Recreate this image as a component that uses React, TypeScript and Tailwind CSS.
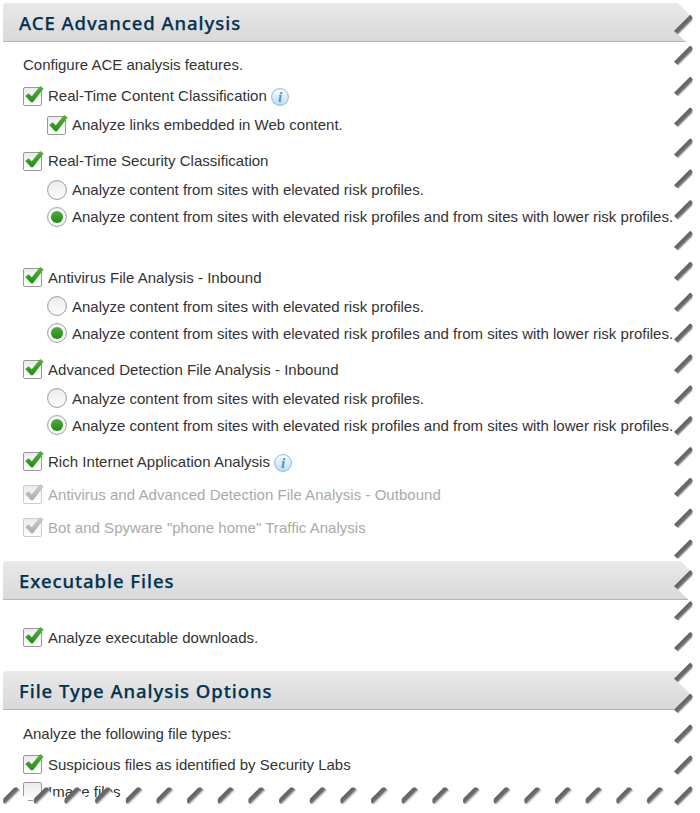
import React from 'react';

interface RowProps {
  label: string;
  checked?: boolean;
  disabled?: boolean;
  info?: boolean;
  raised?: boolean;
  loose?: boolean;
  className?: string;
}

function CheckRow({ label, checked = true, disabled = false, info = false, raised = false, loose = false, className = '' }: RowProps) {
  return (
    <div className={`flex h-5 items-center ${disabled ? 'text-[#aaaaaa]' : 'text-[#333333]'} ${className}`}>
      <svg width="22" height="22" viewBox="0 0 22 22" className={`mr-[3px] shrink-0 ${raised ? 'mb-[2px]' : ''}`}>
        <rect x="0.5" y="2.5" width="18" height="18" rx="1.5" fill="url(#boxFill)" stroke={disabled ? '#cccccc' : '#999999'} />
        {checked && (
          <path
            d="M2.2 11 L5.6 8.2 L8.8 11.2 L17.2 1 L20.6 3.4 L10 17.3 L8 17.3 Z"
            fill={disabled ? 'url(#grayCheck)' : 'url(#greenCheck)'}
          />
        )}
      </svg>
      <span className={`whitespace-nowrap ${loose ? 'tracking-[0.03px]' : ''}`}>{label}</span>
      {info && <InfoIcon />}
    </div>
  );
}

interface RadioProps {
  label: string;
  selected?: boolean;
  raised?: boolean;
  className?: string;
}

function RadioRow({ label, selected = false, raised = false, className = '' }: RadioProps) {
  return (
    <div className={`ml-6 flex h-5 items-center ${className}`}>
      <svg width="20" height="20" viewBox="0 0 20 20" className={`mr-[5px] shrink-0 ${raised ? 'mb-[2px]' : ''}`}>
        <circle cx="10" cy="10" r="9.4" fill={selected ? '#ffffff' : 'url(#boxFill)'} stroke="#999999" strokeWidth="1" />
        {selected && <circle cx="10" cy="10" r="6.1" fill="url(#greenDot)" />}
      </svg>
      <span className="whitespace-nowrap">{label}</span>
    </div>
  );
}

function InfoIcon() {
  return (
    <svg width="18" height="18" viewBox="0 0 18 18" className="mt-[2px] ml-[4.5px] shrink-0">
      <circle cx="9" cy="9" r="8.4" fill="url(#infoFill)" stroke="#8db8d2" strokeWidth="1" />
      <text x="9" y="14" textAnchor="middle" fontFamily="Liberation Serif, serif" fontStyle="italic" fontWeight="bold" fontSize="15" fill="#3b9bd4">
        i
      </text>
    </svg>
  );
}

function SectionHeader({ title }: { title: string }) {
  return (
    <div className="ml-[3px] flex h-[39px] w-[688px] items-center rounded-tl-sm border-b border-[#b4b4b4] bg-linear-to-b from-[#e9e9e9] to-[#d9d9d9] pt-[2px] pl-4">
      <h2 className="font-['Noto_Sans',sans-serif] text-[18.5px] leading-none font-medium tracking-[0.95px] whitespace-nowrap text-[#003350] [-webkit-text-stroke:0.25px_#003350]">
        {title}
      </h2>
    </div>
  );
}

function Defs() {
  return (
    <svg width="0" height="0" className="absolute">
      <defs>
        <linearGradient id="boxFill" x1="0" y1="0" x2="0" y2="1">
          <stop offset="0" stopColor="#ebebeb" />
          <stop offset="1" stopColor="#ffffff" />
        </linearGradient>
        <linearGradient id="greenCheck" x1="0" y1="0" x2="0" y2="1">
          <stop offset="0" stopColor="#4cb82f" />
          <stop offset="1" stopColor="#2b8a1f" />
        </linearGradient>
        <linearGradient id="grayCheck" x1="0" y1="0" x2="0" y2="1">
          <stop offset="0" stopColor="#cccccc" />
          <stop offset="1" stopColor="#adadad" />
        </linearGradient>
        <linearGradient id="greenDot" x1="0" y1="0" x2="0" y2="1">
          <stop offset="0" stopColor="#4bb234" />
          <stop offset="1" stopColor="#27851a" />
        </linearGradient>
        <linearGradient id="infoFill" x1="0" y1="0" x2="0" y2="1">
          <stop offset="0" stopColor="#ffffff" />
          <stop offset="1" stopColor="#b9dcf0" />
        </linearGradient>
        <linearGradient id="tearShade" gradientUnits="userSpaceOnUse" x1="-8" y1="7.5" x2="-3.5" y2="12">
          <stop offset="0" stopColor="#606060" />
          <stop offset="0.6" stopColor="#707070" />
          <stop offset="1" stopColor="#999999" stopOpacity="0.15" />
        </linearGradient>
      </defs>
    </svg>
  );
}

// tips of the torn paper down the right side and peaks along the bottom
const rightTips = Array.from({ length: 26 }, (_, i) => 15.5 + i * 30.85);
const bottomPeaks = Array.from({ length: 22 }, (_, i) => 15 + i * 30.66);

function TornEdge() {
  const right = rightTips.map((y) => `L690.5 ${y} L674.5 ${y + 15.5}`).join(' ');
  const bottom = [...bottomPeaks].reverse().map((x) => `L${x + 15.5} 803 L${x} 787.5`).join(' ');
  return (
    <svg width="700" height="813" viewBox="0 0 700 813" className="pointer-events-none absolute top-0 left-0">
      <path d={`M700 0 L675 0 ${right} L700 813 Z`} fill="#ffffff" />
      <path d={`M0 813 L700 813 L690 787.5 ${bottom} L-1 803 Z`} fill="#ffffff" />
      {rightTips.map((y) => (
        <path key={y} transform={`translate(690 ${y})`} d="M0 -0.5 L1.5 0.2 L2.5 2 L2.5 5.5 L-11.5 19.5 L-16 15.5 Z" fill="url(#tearShade)" />
      ))}
      {bottomPeaks.map((x) => (
        <path key={x} transform={`translate(${x} 787.5)`} d="M-0.5 0 L2 0 L6 3.5 L-6 15.5 L-8.5 17 L-11 16 L-12 14 L-11.5 11 Z" fill="url(#tearShade)" />
      ))}
    </svg>
  );
}

const ELEVATED = 'Analyze content from sites with elevated risk profiles.';
const ALL_SITES = 'Analyze content from sites with elevated risk profiles and from sites with lower risk profiles.';

export default function App() {
  return (
    <div className="relative h-[813px] w-[700px] overflow-hidden bg-white pt-[3px] font-['Liberation_Sans',Arial,sans-serif] text-[15px] leading-5 text-[#333333]">
      <Defs />
      <SectionHeader title="ACE Advanced Analysis" />
      <div className="flex h-[519px] flex-col pt-[13px] pl-[23px]">
        <p>Configure ACE analysis features.</p>
        <CheckRow label="Real-Time Content Classification" info loose className="mt-[11px]" />
        <CheckRow label="Analyze links embedded in Web content." className="mt-[9px] ml-6" />
        <CheckRow label="Real-Time Security Classification" loose className="mt-4" />
        <RadioRow label={ELEVATED} className="mt-[9px]" />
        <RadioRow label={ALL_SITES} selected className="mt-[7px]" />
        <CheckRow label="Antivirus File Analysis - Inbound" raised loose className="mt-[41px]" />
        <RadioRow label={ELEVATED} raised className="mt-[9px]" />
        <RadioRow label={ALL_SITES} selected raised className="mt-[7px]" />
        <CheckRow label="Advanced Detection File Analysis - Inbound" raised loose className="mt-4" />
        <RadioRow label={ELEVATED} raised className="mt-[9px]" />
        <RadioRow label={ALL_SITES} selected raised className="mt-[7px]" />
        <CheckRow label="Rich Internet Application Analysis" info raised loose className="mt-4" />
        <CheckRow label="Antivirus and Advanced Detection File Analysis - Outbound" disabled raised loose className="mt-[13px]" />
        <CheckRow label={'Bot and Spyware "phone home" Traffic Analysis'} disabled raised loose className="mt-[13px]" />
      </div>
      <SectionHeader title="Executable Files" />
      <div className="h-[71px] pt-7 pl-[23px]">
        <CheckRow label="Analyze executable downloads." raised />
      </div>
      <SectionHeader title="File Type Analysis Options" />
      <div className="pt-[14px] pl-[23px]">
        <p>Analyze the following file types:</p>
        <CheckRow label="Suspicious files as identified by Security Labs" raised className="mt-[11px]" />
        <CheckRow label="Image files" checked={false} raised className="mt-[7px]" />
      </div>
      <TornEdge />
    </div>
  );
}
